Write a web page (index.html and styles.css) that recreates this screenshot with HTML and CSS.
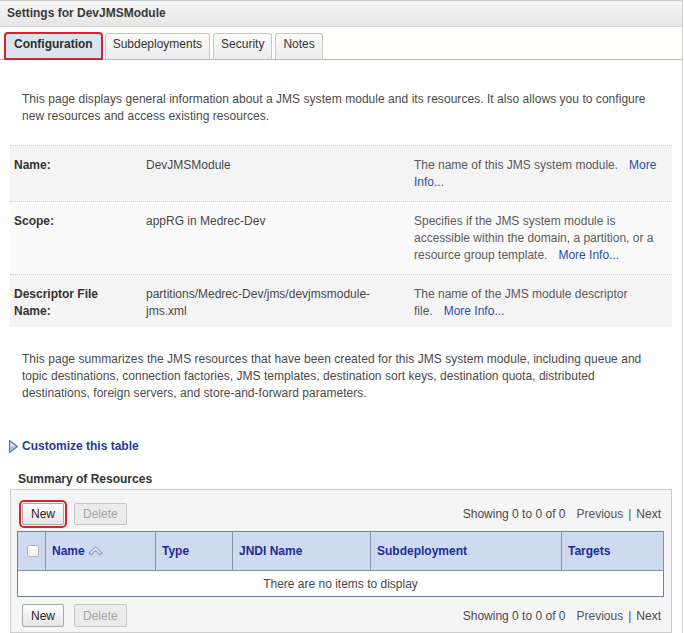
FILE: index.html
```html
<!DOCTYPE html>
<html>
<head>
<meta charset="utf-8">
<link rel="stylesheet" href="styles.css">
</head>
<body>
<div class="page">
  <div class="titlebar">Settings for DevJMSModule</div>
  <div class="tabs">
    <div class="tab active">Configuration</div>
    <div class="tab">Subdeployments</div>
    <div class="tab">Security</div>
    <div class="tab">Notes</div>
  </div>
  <div class="content">
    <p class="intro">This page displays general information about a JMS system module and its resources. It also allows you to configure<br>new resources and access existing resources.</p>
    <div class="props">
      <div class="prop-row">
        <div class="label">Name:</div>
        <div class="value">DevJMSModule</div>
        <div class="desc">The name of this JMS system module.<a class="more" href="#">More</a><br><a class="link" href="#">Info...</a></div>
      </div>
      <div class="prop-row alt">
        <div class="label">Scope:</div>
        <div class="value">appRG in Medrec-Dev</div>
        <div class="desc">Specifies if the JMS system module is<br>accessible within the domain, a partition, or a<br>resource group template.<a class="more" href="#">More Info...</a></div>
      </div>
      <div class="prop-row last">
        <div class="label">Descriptor File<br>Name:</div>
        <div class="value">partitions/Medrec-Dev/jms/devjmsmodule-<br>jms.xml</div>
        <div class="desc">The name of the JMS module descriptor<br>file.<a class="more" href="#">More Info...</a></div>
      </div>
    </div>
    <p class="intro second">This page summarizes the JMS resources that have been created for this JMS system module, including queue and<br>topic destinations, connection factories, JMS templates, destination sort keys, destination quota, distributed<br>destinations, foreign servers, and store-and-forward parameters.</p>
    <a class="customize" href="#"><svg class="tri" width="11" height="15" viewBox="0 0 11 15"><path d="M1.5 1.5 L9.5 7.5 L1.5 13.5 Z" fill="#a9c1e6" stroke="#5b7db3" stroke-width="1.2" stroke-linejoin="round"/><path d="M2.6 3.6 L7.2 7.2 L2.6 7.6 Z" fill="#e6eefa"/></svg>Customize this table</a>
    <div class="summary-title">Summary of Resources</div>
    <div class="resbox">
      <div class="controls">
        <button class="btn highlight">New</button>
        <button class="btn disabled">Delete</button>
        <div class="pager">Showing 0 to 0 of 0<span class="prev">Previous</span><span class="sep">|</span>Next</div>
      </div>
      <table class="restable">
        <thead>
          <tr>
            <th class="c-check"><span class="checkbox"></span></th>
            <th class="c-name">Name<svg class="sort" width="15" height="11" viewBox="0 0 16 11"><path d="M1 8.5 L8 1.5 L15 8.5 L12.5 10 L8 5.5 L3.5 10 Z" fill="#e3ebf7" stroke="#7f9cc9" stroke-width="1.1" stroke-linejoin="round"/></svg></th>
            <th class="c-type">Type</th>
            <th class="c-jndi">JNDI Name</th>
            <th class="c-sub">Subdeployment</th>
            <th class="c-targets">Targets</th>
          </tr>
        </thead>
        <tbody>
          <tr><td colspan="6" class="empty">There are no items to display</td></tr>
        </tbody>
      </table>
      <div class="controls bottom">
        <button class="btn">New</button>
        <button class="btn disabled">Delete</button>
        <div class="pager">Showing 0 to 0 of 0<span class="prev">Previous</span><span class="sep">|</span>Next</div>
      </div>
    </div>
  </div>
</div>
</body>
</html>
```
FILE: styles.css
```css
* { box-sizing: border-box; }
body {
  margin: 0;
  font-family: "Liberation Sans", Arial, sans-serif;
  font-size: 12px;
  color: #474747;
  background: #fff;
}
.page {
  width: 683px;
  height: 633px;
  border-right: 1px solid #d3d3d3;
  overflow: hidden;
}
.titlebar {
  height: 27px;
  border-top: 1px solid #c9c9c9;
  border-bottom: 1px solid #d9d9d9;
  background: linear-gradient(#f7f7f7, #e6e6e6);
  padding-left: 7px;
  line-height: 25px;
  font-weight: bold;
  color: #3a3a3a;
}
.tabs {
  display: flex;
  gap: 3px;
  padding: 6px 0 0 5px;
  height: 33px;
  background: #fffffb;
  border-bottom: 1px solid #b3bacb;
}
.tab {
  height: 26px;
  border: 1px solid #c6c6c6;
  border-bottom: none;
  border-radius: 3px 3px 0 0;
  padding: 0 7px;
  line-height: 20px;
  background: linear-gradient(#fbfbfb, #ececec);
  color: #333;
}
.tab.active {
  background: #dae4ef;
  font-weight: bold;
  color: #2e2e2e;
  padding: 0 8px;
  outline: 2px solid #d3232c;
  outline-offset: -1px;
}
.content {
  padding: 0 10px;
}
.intro {
  margin: 0;
  padding: 31px 0 0 12px;
  line-height: 17px;
  color: #4a4a4a;
  white-space: nowrap;
  letter-spacing: 0.04px;
}
.intro.second {
  padding-top: 24px;
}
.props {
  margin-top: 20px;
}
.prop-row {
  display: grid;
  grid-template-columns: 132px 268px 1fr;
  padding: 11px 0 10px 4px;
  border-top: 1px dotted #cacaca;
  background: #f4f4f4;
  line-height: 17px;
}
.prop-row.alt { background: #fafafa; }
.prop-row.last { padding-bottom: 7px; }
.label {
  font-weight: bold;
  color: #333;
}
.value { color: #474747; }
.desc { color: #5a5a5a; }
.more {
  margin-left: 11px;
  color: #2a4ea6;
  text-decoration: none;
}
.link {
  color: #2a4ea6;
  text-decoration: none;
}
.customize {
  display: flex;
  align-items: center;
  gap: 3px;
  margin: 36px 0 0 -2px;
  line-height: 17px;
  font-weight: bold;
  color: #1d3e93;
  text-decoration: none;
  width: max-content;
}
.summary-title {
  margin-top: 16px;
  padding-left: 8px;
  line-height: 17px;
  font-weight: bold;
  color: #333;
}
.resbox {
  margin-top: 1px;
  border: 1px solid #cdcdcd;
  background: #f5f5f5;
  padding: 13px 7px 5px 6px;
}
.controls {
  display: flex;
  align-items: center;
  gap: 10px;
  height: 22px;
  padding: 0 3px 0 5px;
}
.controls.bottom {
  margin-top: 7px;
  height: 23px;
}
.btn {
  height: 22px;
  border: 1px solid #a8a8a8;
  border-radius: 2px;
  background: linear-gradient(#ffffff, #e4e4e4);
  font-family: "Liberation Sans", Arial, sans-serif;
  font-size: 12px;
  color: #222;
  padding: 0 8px;
}
.controls.bottom .btn { height: 23px; }
.btn.disabled {
  background: #ebebeb;
  border-color: #c6c6c6;
  color: #a6a6a6;
}
.btn.highlight {
  outline: 2px solid #d3232c;
  outline-offset: 1px;
}
.pager {
  margin-left: auto;
  color: #4a4a4a;
}
.prev { margin-left: 11px; color: #555; }
.sep { margin: 0 5px; color: #555; }
.restable {
  margin-top: 6px;
  width: 100%;
  border-collapse: collapse;
  border: 1px solid #6f7f97;
}
.restable th {
  height: 39px;
  background: #cedbee;
  border-right: 1px solid #8593a8;
  text-align: left;
  padding: 0 6px;
  color: #1f2b9b;
  font-weight: bold;
  font-size: 12px;
}
.c-check { width: 28px; }
.c-name { width: 110px; }
.c-type { width: 77px; }
.c-jndi { width: 138px; }
.c-sub { width: 191px; }
.checkbox {
  display: block;
  width: 12px;
  height: 12px;
  margin-left: 3px;
  border: 1px solid #b7b7b7;
  border-radius: 2px;
  background: linear-gradient(#ffffff, #eeeeee);
}
.sort {
  vertical-align: -1px;
  margin-left: 3px;
}
.empty {
  height: 26px;
  background: #fff;
  text-align: center;
  color: #474747;
  border-top: 1px solid #8593a8;
}
```
